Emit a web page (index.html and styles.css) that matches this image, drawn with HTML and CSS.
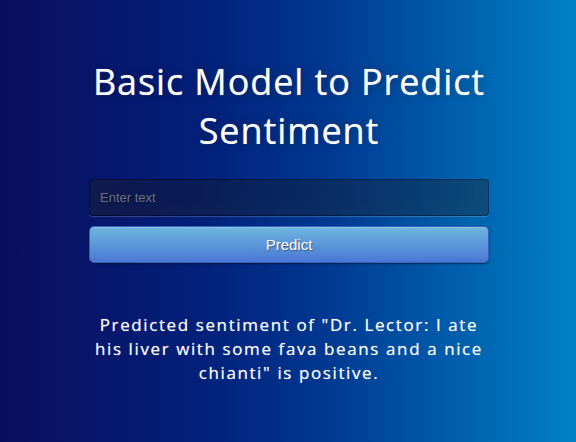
FILE: index.html
```html
<!DOCTYPE html>
<html>
<head>
<meta charset="utf-8">
<link rel="stylesheet" href="styles.css">
</head>
<body>
<div class="login">
  <h1 class="title">Basic Model to Predict Sentiment</h1>
  <form class="form">
    <input class="field" type="text" placeholder="Enter text">
    <button class="btn" type="button">Predict</button>
  </form>
  <p class="result">Predicted sentiment of "Dr. Lector: I ate his liver with some fava beans and a nice chianti" is positive.</p>
</div>
</body>
</html>
```
FILE: styles.css
```css
* { box-sizing: border-box; }
html, body {
  margin: 0;
  height: 100%;
}
body {
  background: linear-gradient(to right, #0a0e5e 0%, #03207a 35%, #00368f 55%, #0081c6 100%);
  font-family: "Open Sans", sans-serif;
  color: #fff;
}
.login {
  width: 400px;
  margin-left: calc(50% - 199px);
  padding-top: 57px;
}
.title {
  margin: 0 0 24px;
  font-size: 36px;
  line-height: 49px;
  font-weight: 400;
  letter-spacing: 0.9px;
  text-align: center;
  text-shadow: 0 0 1px rgba(255,255,255,0.6), 0 0 10px rgba(0,0,0,0.3);
}
.form {
  display: flex;
  flex-direction: column;
  gap: 10px;
  margin: 0;
}
.field {
  width: 100%;
  height: 37px;
  padding: 10px;
  font-family: "Liberation Sans", Arial, sans-serif;
  font-size: 13px;
  color: #fff;
  background: rgba(0,0,0,0.3);
  border: 1px solid rgba(0,0,0,0.3);
  border-radius: 4px;
  outline: none;
  text-shadow: 1px 1px 1px rgba(0,0,0,0.3);
  box-shadow: inset 0 -5px 45px rgba(100,100,100,0.2), 0 1px 1px rgba(255,255,255,0.2);
}
.field::placeholder { color: #6c7184; }
.btn {
  width: 100%;
  height: 37px;
  padding: 9px 14px;
  font-family: "Liberation Sans", Arial, sans-serif;
  font-size: 15px;
  color: #fff;
  background: linear-gradient(to bottom, #6eb6de, #4a77d4);
  border: 1px solid #3762bc;
  border-radius: 5px;
  text-shadow: 1px 1px 1px rgba(0,0,0,0.4);
  box-shadow: inset 0 1px 0 rgba(255,255,255,0.2), 0 1px 2px rgba(0,0,0,0.5);
}
.result {
  margin: 50px 0 0;
  font-size: 17px;
  line-height: 24px;
  letter-spacing: 1.6px;
  text-align: center;
  text-shadow: 0 0 1px rgba(255,255,255,0.5);
}
```
